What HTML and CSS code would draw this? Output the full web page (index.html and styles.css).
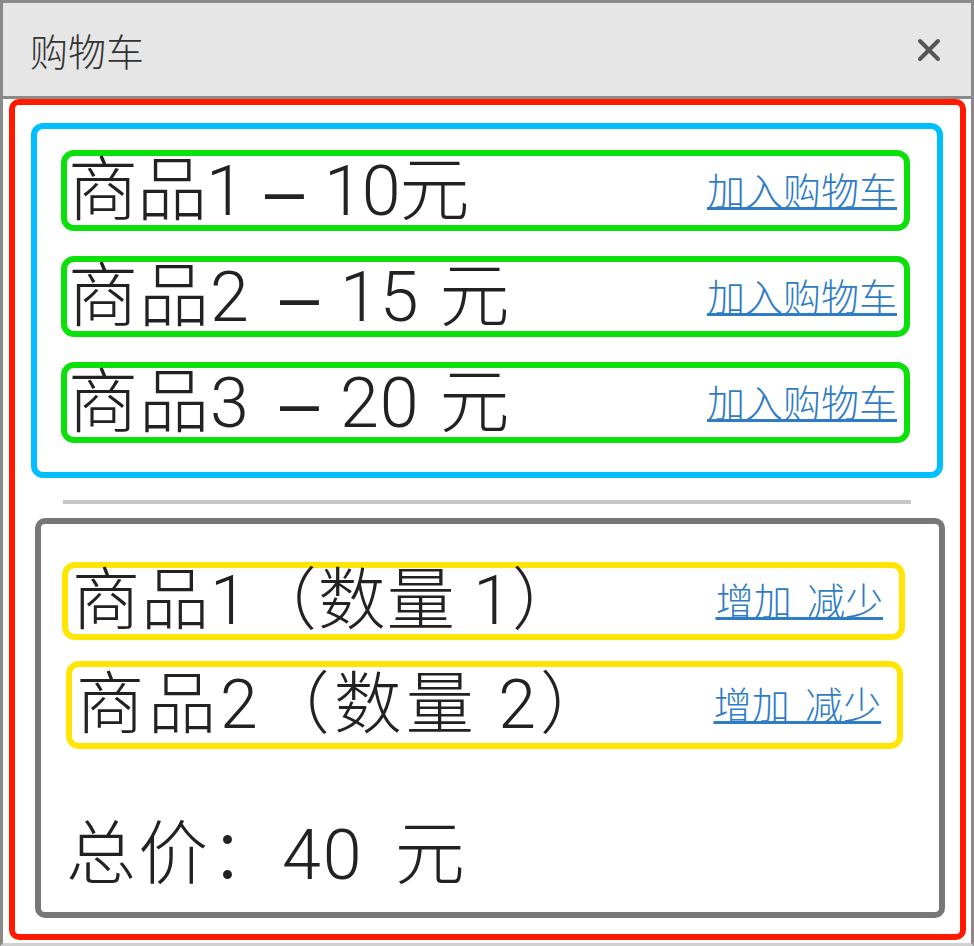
FILE: index.html
```html
<!DOCTYPE html>
<html lang="zh-CN">
<head>
    <meta charset="UTF-8">
    <meta name="viewport" content="width=device-width, initial-scale=1.0">
    <title>购物车</title>
    <link rel="stylesheet" href="styles.css">
</head>
<body>
    <div class="window">
        <div class="titlebar">
            <span class="title">购物车</span>
            <button class="close" aria-label="关闭">
                <svg width="24" height="24" viewBox="0 0 24 24">
                    <path d="M3 3 L21 21 M21 3 L3 21" stroke="#555" stroke-width="4" stroke-linecap="round"/>
                </svg>
            </button>
        </div>

        <div class="content">
            <div class="app">
                <!-- 商品列表 -->
                <div class="product-list">
                    <div class="product">
                        <span class="name">商品1 <span class="dash">–</span> 10元</span>
                        <a href="#" class="link">加入购物车</a>
                    </div>
                    <div class="product">
                        <span class="name wide">商品2 <span class="dash">–</span> 15 元</span>
                        <a href="#" class="link">加入购物车</a>
                    </div>
                    <div class="product">
                        <span class="name wide">商品3 <span class="dash">–</span> 20 元</span>
                        <a href="#" class="link">加入购物车</a>
                    </div>
                </div>

                <div class="divider"></div>

                <!-- 购物车 -->
                <div class="cart">
                    <div class="cart-item">
                        <span class="name">商品1（数量 1）</span>
                        <span class="actions"><a href="#">增加</a> <a href="#">减少</a></span>
                    </div>
                    <div class="cart-item second">
                        <span class="name wide">商品2（数量 2）</span>
                        <span class="actions"><a href="#">增加</a> <a href="#">减少</a></span>
                    </div>
                    <div class="total">总价：40 元</div>
                </div>
            </div>
        </div>
    </div>
</body>
</html>
```

FILE: styles.css
```css
body {
    margin: 0;
    font-family: Roboto, "Noto Sans CJK SC", sans-serif;
    font-weight: 300;
    color: #222;
    background: #fff;
}

.window {
    height: 946px;
    box-sizing: border-box;
    border: 3px solid #8a8a8a;
    border-bottom-color: #d0d0d0;
    display: flex;
    flex-direction: column;
}

.titlebar {
    height: 93px;
    flex: none;
    background-color: #e6e6e6;
    border-bottom: 3px solid #8a8a8a;
    display: flex;
    align-items: center;
    justify-content: space-between;
    padding: 0 30px 0 27px;
}

.title {
    font-size: 38px;
    color: #333;
}

.close {
    border: none;
    background: none;
    padding: 0;
    display: flex;
    cursor: pointer;
}

.content {
    flex: 1;
    padding: 0 5px 3px 6px;
    display: flex;
}

.app {
    flex: 1;
    border: 6px solid #ff1a00;
    border-radius: 10px;
    padding: 18px 17px 16px 16px;
    display: flex;
    flex-direction: column;
}

.product-list {
    border: 6px solid #00bfff;
    border-radius: 12px;
    padding: 21px 27px 29px 24px;
    display: flex;
    flex-direction: column;
    gap: 25px;
}

.product,
.cart-item {
    display: flex;
    align-items: center;
    justify-content: space-between;
    border: 6px solid #0be00b;
    border-radius: 13px;
    height: 69px;
    padding: 0 7px 0 1px;
}

.name {
    font-size: 70px;
    line-height: 1;
    letter-spacing: -1px;
    word-spacing: 5px;
}

.name.wide {
    letter-spacing: 1px;
    word-spacing: 2px;
}

.dash {
    font-family: "Liberation Sans", sans-serif;
    font-weight: normal;
}

.wide .dash {
    margin-left: 10px;
}

.link,
.actions {
    font-size: 38px;
    line-height: 1;
    color: #2f7cc6;
    text-decoration: underline;
    margin-top: 2px;
}

.actions {
    word-spacing: 6px;
}

.actions a {
    color: inherit;
}

.divider {
    height: 4px;
    background-color: #c6c6c6;
    margin: 22px 32px 14px 32px;
}

.cart {
    flex: 1;
    border: 6px solid #777;
    border-radius: 10px;
    margin: 0 -2px 0 4px;
    padding: 38px 34px 0 21px;
    display: flex;
    flex-direction: column;
    gap: 21px;
}

.cart-item {
    border-color: #ffe600;
    height: 66px;
    padding-right: 16px;
}

.cart-item .name {
    font-size: 68px;
    letter-spacing: 1px;
    word-spacing: 0;
    margin-left: 3px;
}

.cart-item .name.wide {
    letter-spacing: 4px;
}

.cart-item.second {
    height: 76px;
    margin: 0 2px 0 4px;
}

.total {
    font-size: 70px;
    line-height: 1;
    letter-spacing: 2px;
    word-spacing: 12px;
    margin-top: 50px;
    padding-left: 4px;
}
```
